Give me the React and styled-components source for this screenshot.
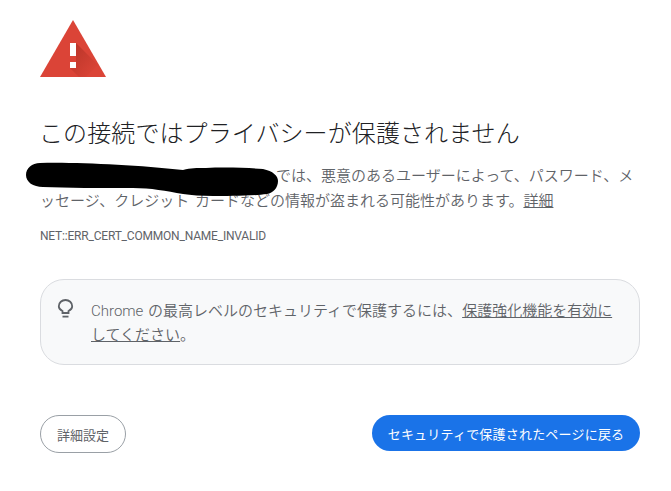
import styled, { createGlobalStyle } from 'styled-components';

const GlobalStyle = createGlobalStyle`
  html, body {
    margin: 0;
    background: #ffffff;
  }

  body {
    font-family: Roboto, 'Noto Sans CJK JP', sans-serif;
    font-weight: 350;
    color: #5f6368;
  }
`;

const WarningIcon = () => (
  <Triangle viewBox="0 0 66 57" aria-hidden="true">
    <defs>
      <linearGradient id="iconShadow" x1="0.1" y1="0.1" x2="0.9" y2="0.9">
        <stop offset="0" stopColor="#8a1f14" stopOpacity="0.4" />
        <stop offset="1" stopColor="#8a1f14" stopOpacity="0" />
      </linearGradient>
    </defs>
    <polygon points="33,0 66,57 0,57" fill="#db4437" />
    <polygon points="36,23 58,45 46,57 39,57 30,48 36,48" fill="url(#iconShadow)" />
    <rect x="30" y="23" width="6" height="13" fill="#ffffff" />
    <rect x="30" y="42" width="6" height="6" fill="#ffffff" />
  </Triangle>
);

const BulbIcon = () => (
  <svg width="18" height="20" viewBox="0 0 18 20" fill="none" stroke="#5f6368" strokeWidth="1.8" aria-hidden="true">
    <path d="M5.5 14v-2C3.2 10.9 1.8 9.3 1.8 7.2 1.8 3.6 4.8 1 8.5 1s6.7 2.6 6.7 6.2c0 2.1-1.4 3.7-3.7 4.8v2z" />
    <path d="M5.5 17.6h6" />
  </svg>
);

const App = () => (
  <Page>
    <GlobalStyle />
    <WarningIcon />
    <Heading>この接続ではプライバシーが保護されません</Heading>
    <Message>
      <Redacted>
        <svg width="254" height="36" viewBox="0 0 254 36" aria-hidden="true">
          <path
            d="M14 1C50 0 110 3 157 8c8-2 13-2 23-2 20-1 45 0 57 1 10 2 15 7 15 12 0 7-5 12-11 13-16 2-41 2-54 2-12 0-22-1-30-2-17-3-32-6-50-6-32 0-67 0-90-1C7 25 0 20 0 13 0 6 6 1 14 1z"
            fill="#000000"
          />
        </svg>
      </Redacted>
      では、悪意のあるユーザーによって、パスワード、メ
      <br />
      ッセージ、クレジット カードなどの情報が盗まれる可能性があります。<TextLink href="#">詳細</TextLink>
    </Message>
    <ErrorCode>NET::ERR_CERT_COMMON_NAME_INVALID</ErrorCode>
    <Notice>
      <NoticeIcon>
        <BulbIcon />
      </NoticeIcon>
      <NoticeText>
        Chrome の最高レベルのセキュリティで保護するには、<TextLink href="#">保護強化機能を有効にしてください</TextLink>。
      </NoticeText>
    </Notice>
    <Actions>
      <OutlineButton>詳細設定</OutlineButton>
      <PrimaryButton>セキュリティで保護されたページに戻る</PrimaryButton>
    </Actions>
  </Page>
);

const Page = styled.main`
  box-sizing: border-box;
  width: 671px;
  height: 491px;
  padding: 20px 31px 0 40px;
  overflow: hidden;
`;

const Triangle = styled.svg`
  display: block;
  width: 66px;
  height: 57px;
`;

const Heading = styled.h1`
  margin: 40px 0 0 -1px;
  font-size: 24px;
  font-weight: 300;
  line-height: 34px;
  letter-spacing: 0.1px;
  color: #202124;
`;

const Message = styled.p`
  margin: 13px 0 0;
  font-size: 15px;
  line-height: 25px;
  word-spacing: 2px;
`;

const Redacted = styled.span`
  position: relative;
  display: inline-block;
  width: 236px;
  height: 1em;

  svg {
    position: absolute;
    left: -14px;
    top: -4px;
  }
`;

const TextLink = styled.a`
  color: inherit;
  text-decoration: underline;
`;

const ErrorCode = styled.div`
  margin-top: 13px;
  font-size: 12px;
  font-weight: 400;
  line-height: 18px;
  letter-spacing: -0.2px;
`;

const Notice = styled.section`
  display: flex;
  box-sizing: border-box;
  height: 86px;
  margin-top: 34px;
  padding: 19px 20px 0 16px;
  background: #f8f9fa;
  border: 1px solid #dadce0;
  border-radius: 24px;
`;

const NoticeIcon = styled.div`
  flex: none;
  width: 34px;
`;

const NoticeText = styled.p`
  margin: 0;
  font-size: 15px;
  line-height: 24px;
  word-spacing: 1px;
`;

const Actions = styled.div`
  display: flex;
  align-items: flex-start;
  justify-content: space-between;
  margin-top: 50px;
`;

const OutlineButton = styled.button`
  box-sizing: border-box;
  width: 86px;
  height: 38px;
  padding: 0;
  font: inherit;
  font-size: 13px;
  font-weight: 400;
  color: #5f6368;
  background: #ffffff;
  border: 1px solid #9aa0a6;
  border-radius: 19px;
`;

const PrimaryButton = styled.button`
  box-sizing: border-box;
  width: 268px;
  height: 36px;
  padding: 0;
  font: inherit;
  font-size: 13px;
  font-weight: 400;
  letter-spacing: 0.2px;
  color: #ffffff;
  background: #1a73e8;
  border: none;
  border-radius: 18px;
`;

export default App;
